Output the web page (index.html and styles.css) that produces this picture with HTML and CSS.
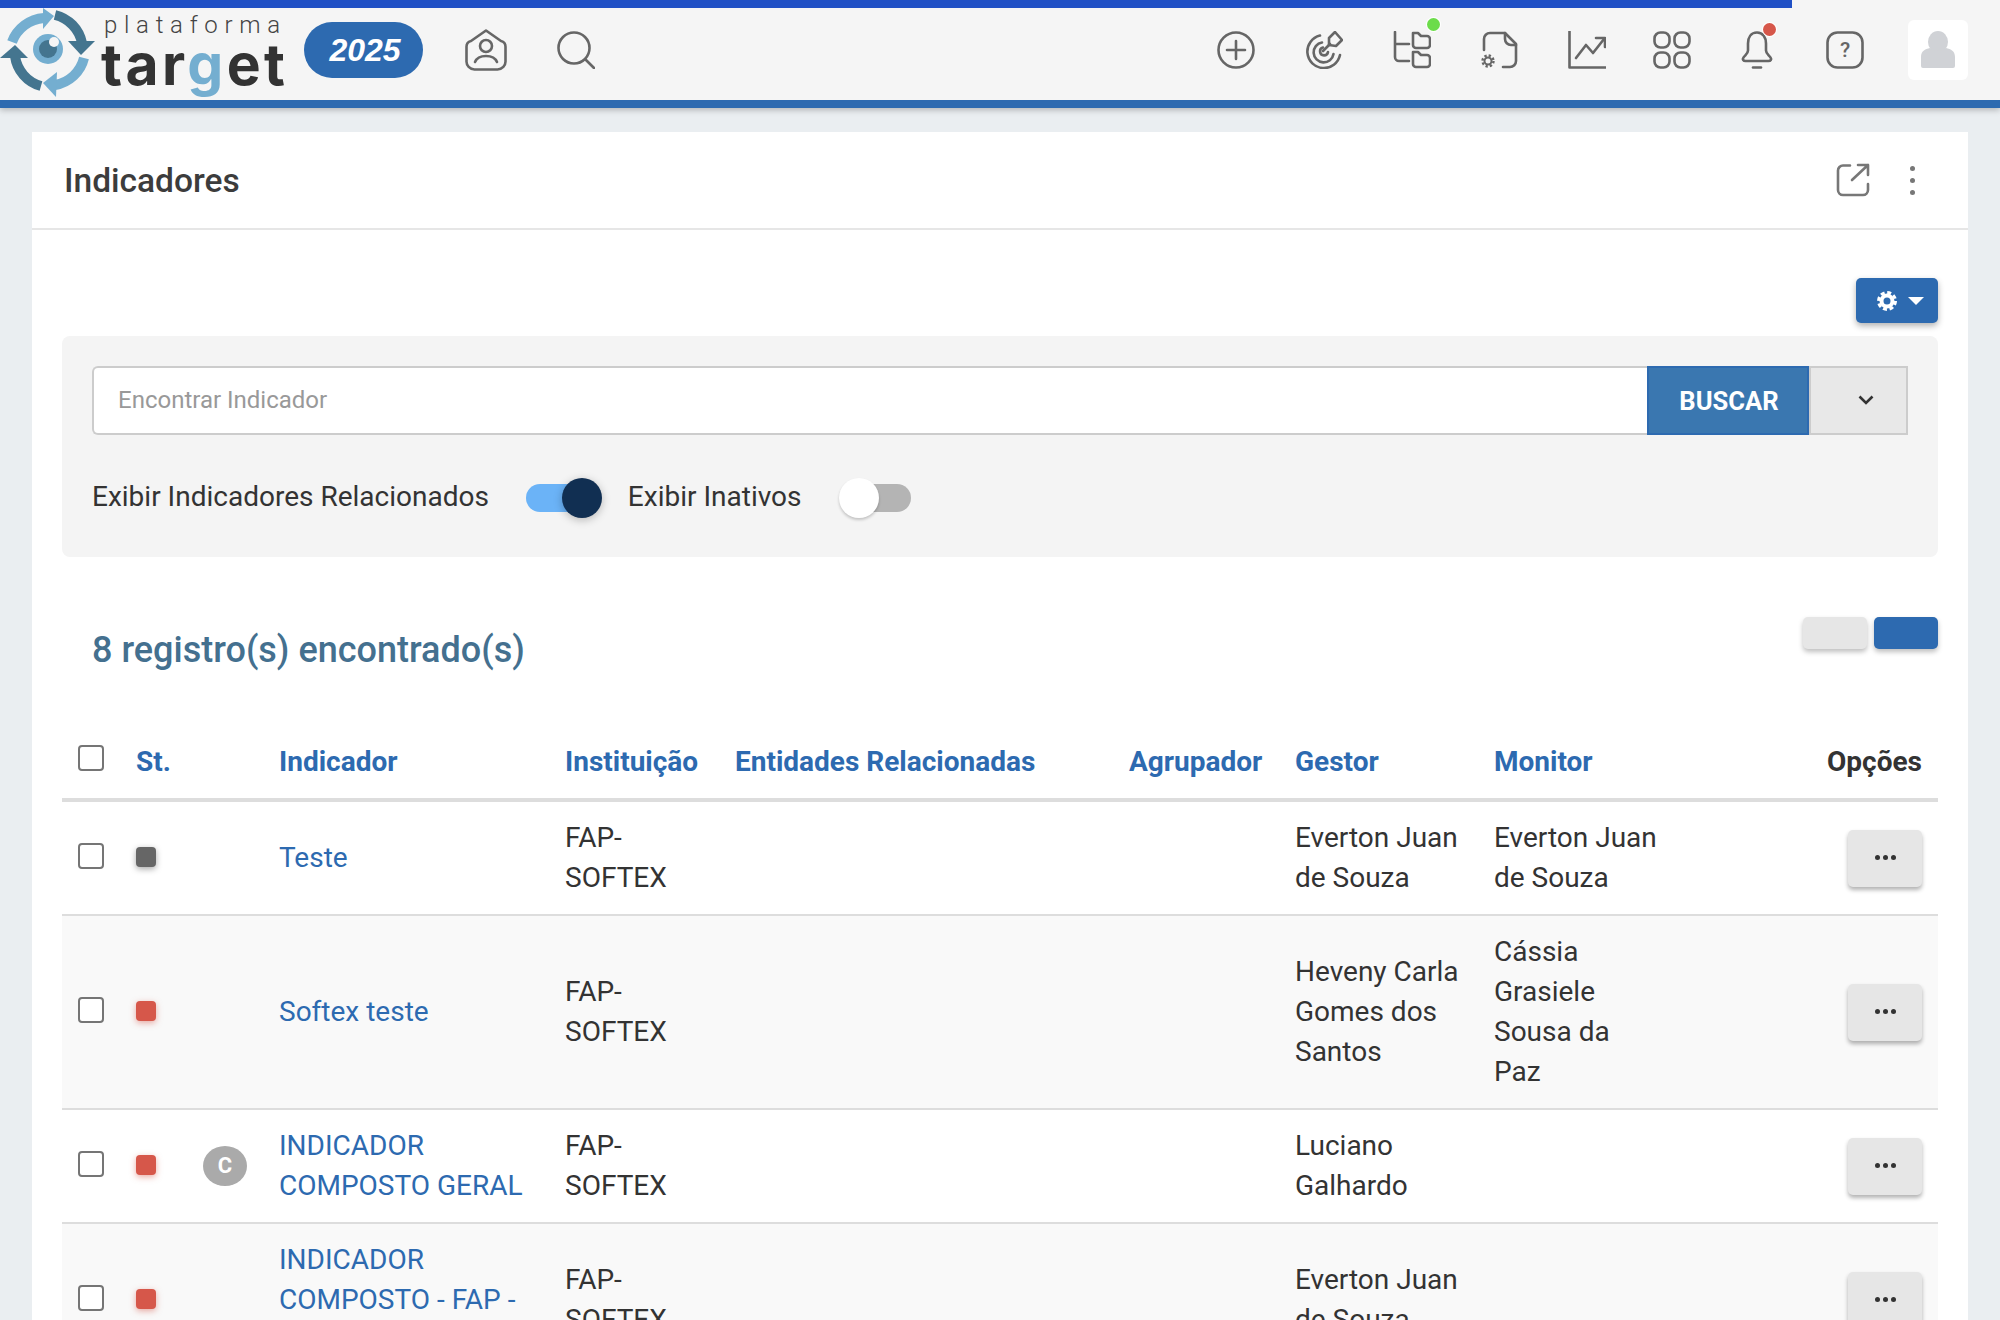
FILE: index.html
```html
<!DOCTYPE html>
<html lang="pt-BR">
<head>
<meta charset="utf-8">
<title>Indicadores</title>
<link rel="stylesheet" href="styles.css">
</head>
<body>
<header class="topbar">
  <div class="progress"></div>
  <div class="nav">
    <div class="logo">
      <svg class="logo-mark" width="96" height="92" viewBox="0 0 96 92">
        <g transform="translate(0,-8)" fill="none" stroke-width="10">
          <path d="M12 42A37 37 0 0 1 44 18" stroke="#74aed0"/>
          <polygon points="43,8 54,16 43,29" fill="#74aed0" stroke="none"/>
          <path d="M55 15A36 36 0 0 1 82 43" stroke="#44758f"/>
          <polygon points="68,41 95,41 81,55" fill="#44758f" stroke="none"/>
          <path d="M84 58A36 36 0 0 1 55 85" stroke="#74aed0"/>
          <polygon points="57,72 56,97 43,83" fill="#74aed0" stroke="none"/>
          <path d="M41 86A36 36 0 0 1 15 56" stroke="#44758f"/>
          <polygon points="0,58 28,58 15,45" fill="#44758f" stroke="none"/>
          <circle cx="48" cy="49" r="15" fill="#74aed0" stroke="none"/>
          <circle cx="48" cy="49" r="9" fill="#44758f" stroke="none"/>
          <circle cx="54" cy="42" r="5" fill="#f5f5f5" stroke="none"/>
        </g>
      </svg>
      <div class="logo-text">
        <div class="logo-top">plataforma</div>
        <div class="logo-name">tar<span class="logo-g">g</span>et</div>
      </div>
    </div>
    <div class="year">2025</div>
    <svg class="ico person" width="42" height="42" viewBox="0 0 42 42"><path d="M21 1.500 36 12a6 6 0 0 1 4.500 6V32a8 8 0 0 1-8 8.500H9.500a8 8 0 0 1-8-8.500V18A6 6 0 0 1 6 12Z"/><circle cx="21" cy="17" r="6"/><path d="M10 33c2-5 6-6 11-6s9 1 11 6"/></svg>
    <svg class="ico search" width="38" height="38" viewBox="0 0 38 38"><circle cx="17" cy="17" r="15.500"/><path d="M29 29 37 37"/></svg>
    <div class="nav-right">
      <svg class="ico" width="38" height="38" viewBox="0 0 38 38"><circle cx="19" cy="19" r="17.500"/><path d="M19 10V28M10 19H28"/></svg>
      <svg class="ico" width="38" height="38" viewBox="0 0 38 38"><path d="M15 4.500A16.500 16.500 0 1 0 35 24"/><path d="M17 11.500A10 10 0 1 0 28.500 23"/><path d="M18 16.500A4 4 0 1 0 23 21"/><path d="M18 20 25 13"/><path d="M24 14 24 7 30 1 37 9 31 15Z"/></svg>
      <span class="ico-wrap">
        <svg class="ico" width="38" height="38" viewBox="0 0 38 38"><path d="M2 1V26a4 4 0 0 0 4 4H16M2 13H16"/><path d="M20 2h5l3 3h6a3 3 0 0 1 3 3v6a3 3 0 0 1-3 3H23a3 3 0 0 1-3-3Z"/><path d="M20 21h5l3 3h6a3 3 0 0 1 3 3v6a3 3 0 0 1-3 3H23a3 3 0 0 1-3-3Z"/></svg>
        <span class="dot dot-green"></span>
      </span>
      <svg class="ico" width="38" height="38" viewBox="0 0 38 38"><path d="M3 19V8a6 6 0 0 1 6-6H24L35 13V30a6 6 0 0 1-6 6H22"/><path d="M24 2V8a6 6 0 0 0 6 6h5"/><circle class="gear-in" cx="7" cy="30" r="3.500"/><circle class="gear-out" cx="7" cy="30" r="5.500"/></svg>
      <svg class="ico t1" width="38" height="38" viewBox="0 0 38 38"><path d="M1.500 0V36.500H38"/><path d="M8 27 18 14 25 22 36 8"/><path d="M28 7H37V16"/></svg>
      <svg class="ico t3" width="38" height="38" viewBox="0 0 38 38"><rect x="1.500" y="1.500" width="15" height="15" rx="6"/><rect x="21.500" y="1.500" width="15" height="15" rx="6"/><rect x="1.500" y="21.500" width="15" height="15" rx="6"/><rect x="21.500" y="21.500" width="15" height="15" rx="6"/></svg>
      <span class="ico-wrap t3">
        <svg class="ico" width="38" height="38" viewBox="0 0 38 38"><path d="M19 1.500c-6 0-9 5-9 11v7c0 3-2 4-4.500 7-1.500 2 0 3.500 2 3.500H30.500c2 0 3.500-1.500 2-3.500-2.500-3-4.500-4-4.500-7v-7c0-6-3-11-9-11Z"/><path d="M15 36.500H23"/></svg>
        <span class="dot dot-red"></span>
      </span>
      <svg class="ico" width="38" height="38" viewBox="0 0 38 38"><rect x="1.500" y="1.500" width="35" height="35" rx="10"/><text class="q" x="19" y="26" text-anchor="middle">?</text></svg>
      <div class="avatar">
        <svg width="36" height="38" viewBox="0 0 36 38"><ellipse cx="18" cy="11" rx="10" ry="11" fill="#d0d2d6"/><path d="M1 35V26C1 20 5 18 10 17 14 21 22 21 26 17 31 18 35 20 35 26V35Q35 37 33 37H3Q1 37 1 35Z" fill="#d0d2d6"/></svg>
      </div>
    </div>
  </div>
  <div class="band"></div>
</header>

<main class="card">
  <div class="card-head">
    <h1 class="card-title">Indicadores</h1>
    <svg class="open" width="34" height="34" viewBox="0 0 34 34"><path d="M14 2.500H7a5 5 0 0 0-5 5V27a5 5 0 0 0 5 5H27a5 5 0 0 0 5-5V21"/><path d="M16 17 32 2M22 2H32V12"/></svg>
    <div class="kebab"><span></span><span></span><span></span></div>
  </div>
  <div class="card-body">
    <div class="gear-row">
      <button class="gear-btn" type="button">
        <svg width="20" height="20" viewBox="0 0 20 20"><circle cx="10" cy="10" r="5.500" fill="none" stroke="#fff" stroke-width="4"/><circle cx="10" cy="10" r="8.500" fill="none" stroke="#fff" stroke-width="3" stroke-dasharray="4 2.670"/></svg>
        <span class="caret"></span>
      </button>
    </div>
    <section class="filters">
      <div class="search-row">
        <input class="search-input" type="text" placeholder="Encontrar Indicador">
        <button class="btn-search" type="button">BUSCAR</button>
        <button class="btn-more" type="button"><svg width="16" height="10" viewBox="0 0 16 10"><path d="M1.500 1.500 8 8 14.500 1.500" fill="none" stroke="#333" stroke-width="2.600"/></svg></button>
      </div>
      <div class="switch-row">
        <span class="switch-label">Exibir Indicadores Relacionados</span>
        <span class="switch on"><span class="knob"></span></span>
        <span class="switch-label">Exibir Inativos</span>
        <span class="switch off"><span class="knob"></span></span>
      </div>
    </section>
    <div class="result-row">
      <h2 class="result-count">8 registro(s) encontrado(s)</h2>
      <div class="view-btns">
        <button class="view view-grey" type="button"></button>
        <button class="view view-blue" type="button"></button>
      </div>
    </div>
    <table class="grid">
      <colgroup>
        <col class="c1"><col class="c2"><col class="c3"><col class="c4"><col class="c5"><col class="c6"><col class="c7"><col class="c8"><col class="c9"><col class="c10">
      </colgroup>
      <thead>
        <tr>
          <th><input class="check" type="checkbox"></th>
          <th>St.</th>
          <th></th>
          <th>Indicador</th>
          <th>Instituição</th>
          <th>Entidades Relacionadas</th>
          <th>Agrupador</th>
          <th>Gestor</th>
          <th>Monitor</th>
          <th class="opt-head">Opções</th>
        </tr>
      </thead>
      <tbody>
        <tr>
          <td><input class="check" type="checkbox"></td>
          <td><span class="status grey"></span></td>
          <td></td>
          <td><a class="link">Teste</a></td>
          <td>FAP-SOFTEX</td>
          <td></td><td></td>
          <td>Everton Juan de Souza</td>
          <td>Everton Juan de Souza</td>
          <td class="opt"><button class="more" type="button"><span></span><span></span><span></span></button></td>
        </tr>
        <tr class="alt">
          <td><input class="check" type="checkbox"></td>
          <td><span class="status red"></span></td>
          <td></td>
          <td><a class="link">Softex teste</a></td>
          <td>FAP-SOFTEX</td>
          <td></td><td></td>
          <td>Heveny Carla Gomes dos Santos</td>
          <td>Cássia Grasiele Sousa da Paz</td>
          <td class="opt"><button class="more" type="button"><span></span><span></span><span></span></button></td>
        </tr>
        <tr>
          <td><input class="check" type="checkbox"></td>
          <td><span class="status red"></span></td>
          <td><span class="badge">C</span></td>
          <td><a class="link">INDICADOR COMPOSTO GERAL</a></td>
          <td>FAP-SOFTEX</td>
          <td></td><td></td>
          <td>Luciano Galhardo</td>
          <td></td>
          <td class="opt"><button class="more" type="button"><span></span><span></span><span></span></button></td>
        </tr>
        <tr class="alt">
          <td><input class="check" type="checkbox"></td>
          <td><span class="status red"></span></td>
          <td></td>
          <td><a class="link">INDICADOR COMPOSTO - FAP - SOFTEX</a></td>
          <td>FAP-SOFTEX</td>
          <td></td><td></td>
          <td>Everton Juan de Souza</td>
          <td></td>
          <td class="opt"><button class="more" type="button"><span></span><span></span><span></span></button></td>
        </tr>
      </tbody>
    </table>
  </div>
</main>
</body>
</html>
```
FILE: styles.css
```css
* { box-sizing: border-box; }
html, body { height: 1320px; overflow: hidden; }
body {
  margin: 0;
  background: #eaeef1;
  font-family: Roboto, "Liberation Sans", sans-serif;
  font-size: 28px;
  line-height: 40px;
  color: #333;
}
button { font-family: inherit; cursor: pointer; }

.topbar { background: #f5f5f5; box-shadow: 0 2px 6px rgba(0,0,0,.25); }
.progress { width: 1792px; height: 8px; background: #2050c5; }
.nav { height: 92px; display: flex; align-items: center; padding-bottom: 8px; }
.band { height: 8px; background: #2d6ab0; }

.logo { width: 304px; height: 92px; display: flex; flex: none; align-self: flex-start; }
.logo-mark { flex: none; }
.logo-text { margin-left: 5px; }
.logo-top {
  font-family: Roboto, sans-serif;
  font-weight: 300;
  font-size: 24px;
  line-height: 24px;
  letter-spacing: 6.700px;
  color: #444;
  margin-left: 3px;
  margin-top: 5px;
  white-space: nowrap;
}
.logo-name {
  font-family: Inter, sans-serif;
  font-weight: 700;
  font-size: 57px;
  line-height: 52px;
  letter-spacing: 3.400px;
  color: #333;
  margin-top: 2px;
  white-space: nowrap;
}
.logo-g { color: #74aed0; }

.year {
  width: 119px; height: 56px; flex: none;
  display: flex; align-items: center; justify-content: center;
  border-radius: 28px;
  background: #2d6ab0;
  color: #fff;
  font-family: "Liberation Sans", sans-serif;
  font-style: italic;
  font-weight: 700;
  font-size: 32px;
  padding-left: 3px;
}
.ico { fill: none; stroke: #666; stroke-width: 2.600; stroke-linecap: round; stroke-linejoin: round; flex: none; display: block; }
.ico .gear-in { stroke-width: 2; }
.ico .gear-out { stroke-width: 2.400; stroke-dasharray: 2.300 2.020; stroke-linecap: butt; }
.person { margin-left: 42px; }
.search { margin-left: 50px; }
.q { font-family: Roboto, sans-serif; font-size: 21px; font-weight: 500; fill: #666; stroke: none; }

.nav-right { margin-left: auto; margin-right: 32px; display: flex; align-items: center; gap: 50px; }
.ico-wrap { position: relative; display: block; flex: none; }
.t1 { margin-left: -1px; }
.t3 { margin-left: -3px; }
.dot { position: absolute; width: 13px; height: 13px; border-radius: 50%; box-shadow: 0 0 0 1px #fff; }
.dot-green { right: -9px; top: -13px; background: #6cdc4a; }
.dot-red { right: 0; top: -8px; background: #d6574a; }
.avatar {
  width: 60px; height: 60px; margin-left: -6px;
  background: #fff; border-radius: 6px;
  display: flex; align-items: center; justify-content: center;
}

.card { margin: 24px 32px 0; background: #fff; height: 1200px; }
.card-head { height: 98px; border-bottom: 2px solid #e6e6e6; display: flex; align-items: center; padding: 0 53px 0 32px; }
.card-title { margin: 2px auto 0 0; font-size: 33.500px; font-weight: 500; line-height: 40px; color: #3c3c3c; }
.open { fill: none; stroke: #777; stroke-width: 2.600; stroke-linecap: round; stroke-linejoin: round; }
.kebab { margin-left: 40px; display: flex; flex-direction: column; gap: 7px; }
.kebab span { display: block; width: 5px; height: 5px; border-radius: 50%; background: #777; }

.card-body { padding: 48px 30px 0; }
.gear-row { display: flex; justify-content: flex-end; }
.gear-btn {
  width: 82px; height: 45px; border: 0; border-radius: 5px;
  background: #2d6ab0;
  box-shadow: 0 3px 6px rgba(0,0,0,.3);
  display: flex; align-items: center; justify-content: flex-end;
  gap: 11px; padding: 0 14px 0 0;
}
.caret { width: 0; height: 0; border-left: 8px solid transparent; border-right: 8px solid transparent; border-top: 8px solid #fff; }

.filters { margin-top: 13px; height: 221px; background: #f4f4f4; border-radius: 8px; padding: 30px 30px 0; }
.search-row { display: flex; height: 69px; }
.search-input {
  flex: 1; min-width: 0; height: 69px;
  border: 2px solid #ccc; border-right: 0;
  border-radius: 6px 0 0 6px;
  background: #fff;
  padding: 0 24px 2px;
  font: inherit;
  font-size: 24px;
  color: #333;
  outline: none;
}
.search-input::placeholder { color: #999; opacity: 1; }
.btn-search {
  width: 162px; flex: none;
  border: 2px solid #2d6ab0;
  background: #3a77b0;
  color: #fff;
  font-size: 25.600px;
  font-weight: 700;
  padding: 0 0 0 2px;
}
.btn-more {
  width: 99px; flex: none;
  border: 2px solid #ccc;
  background: #e8e8e8;
  padding: 0 0 0 14px;
}
.switch-row { display: flex; align-items: center; margin-top: 42px; height: 40px; }
.switch-label { line-height: 40px; white-space: nowrap; }
.switch { position: relative; display: block; height: 28px; flex: none; border-radius: 14px; margin-top: 2px; }
.switch.on { width: 64px; margin-left: 37px; margin-right: 38px; background: #6bb3f7; }
.switch.off { width: 58px; margin-left: 51px; background: #b4b4b4; }
.knob { position: absolute; top: -6px; width: 40px; height: 40px; border-radius: 50%; }
.on .knob { right: -12px; background: #112f52; box-shadow: 0 2px 8px rgba(0,0,0,.25); }
.off .knob { left: -14px; background: #fff; box-shadow: 0 2px 3px rgba(0,0,0,.2); }

.result-row { display: flex; justify-content: space-between; align-items: flex-start; padding: 60px 0 0 30px; }
.result-count { margin: 0; font-size: 36px; font-weight: 500; line-height: 66px; color: #44708f; }
.view-btns { display: flex; gap: 7px; }
.view { width: 64px; height: 32px; border: 0; border-radius: 5px; box-shadow: 0 3px 5px rgba(0,0,0,.25); }
.view-grey { background: #e6e6e6; }
.view-blue { background: #2d6ab0; }

.grid { width: 1876px; table-layout: fixed; border-collapse: separate; border-spacing: 0; margin-top: 39px; }
.c1 { width: 58px; } .c2 { width: 66px; } .c3 { width: 77px; } .c4 { width: 286px; } .c5 { width: 170px; }
.c6 { width: 394px; } .c7 { width: 166px; } .c8 { width: 199px; } .c9 { width: 198px; } .c10 { width: 262px; }
.grid th {
  height: 80px;
  padding: 3px 16px 0;
  border-bottom: 4px solid #ddd;
  text-align: left;
  color: #2d6ab0;
  font-weight: 700;
  white-space: nowrap;
  vertical-align: middle;
}
.grid th.opt-head { text-align: right; color: #333; }
.grid td { padding: 16px; border-bottom: 2px solid #ddd; vertical-align: middle; }
.grid tr.alt td { background: #f9f9f9; }
.grid td.opt { text-align: right; }
.check {
  appearance: none; -webkit-appearance: none;
  display: block; width: 26px; height: 26px; margin: -7px 0 0;
  border: 2px solid #757575; border-radius: 4px; background: #fff;
}
.grid td .check { margin: -4px 0 0; }
.link { color: #2d6ab0; }
.status { display: block; width: 20px; height: 20px; border-radius: 4px; margin-top: -3px; }
.status.grey { background: #666; box-shadow: 0 2px 6px rgba(0,0,0,.35); }
.status.red { background: #d6574a; box-shadow: 0 2px 6px rgba(214,87,74,.5); }
.badge {
  display: flex; align-items: center; justify-content: center;
  width: 44px; height: 40px; border-radius: 50%; margin-left: 1px;
  background: #aaa; color: #fff; font-size: 22px; font-weight: 700;
}
.more {
  width: 74px; height: 57px; border: 0; border-radius: 5px;
  background: #e6e6e6;
  box-shadow: 0 3px 4px rgba(0,0,0,.3);
  display: inline-flex; align-items: center; justify-content: center; gap: 3px;
  padding: 0 0 2px;
  vertical-align: middle;
}
.more span { display: block; width: 5px; height: 5px; border-radius: 50%; background: #333; }
```
